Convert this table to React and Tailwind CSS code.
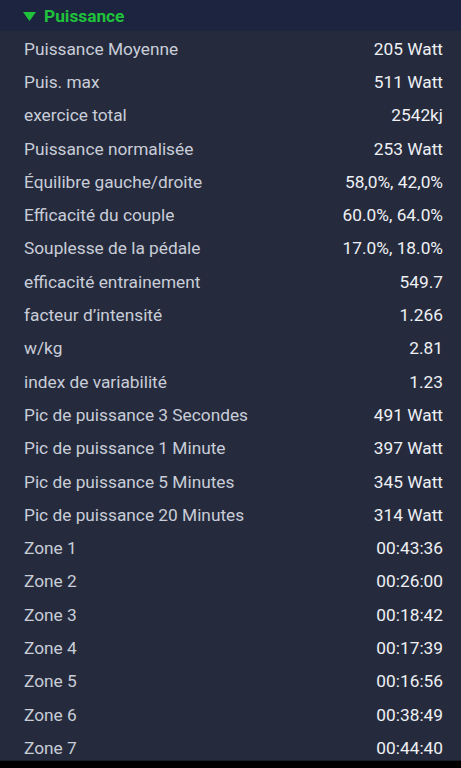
import React from "react";

const ROWS = [
  ["Puissance Moyenne", "205 Watt"],
  ["Puis. max", "511 Watt"],
  ["exercice total", "2542kj"],
  ["Puissance normalisée", "253 Watt"],
  ["Équilibre gauche/droite", "58,0%, 42,0%"],
  ["Efficacité du couple", "60.0%, 64.0%"],
  ["Souplesse de la pédale", "17.0%, 18.0%"],
  ["efficacité entrainement", "549.7"],
  ["facteur d’intensité", "1.266"],
  ["w/kg", "2.81"],
  ["index de variabilité", "1.23"],
  ["Pic de puissance 3 Secondes", "491 Watt"],
  ["Pic de puissance 1 Minute", "397 Watt"],
  ["Pic de puissance 5 Minutes", "345 Watt"],
  ["Pic de puissance 20 Minutes", "314 Watt"],
  ["Zone 1", "00:43:36"],
  ["Zone 2", "00:26:00"],
  ["Zone 3", "00:18:42"],
  ["Zone 4", "00:17:39"],
  ["Zone 5", "00:16:56"],
  ["Zone 6", "00:38:49"],
  ["Zone 7", "00:44:40"],
];

export default function App() {
  return (
    <div className="h-[768px] bg-black overflow-hidden font-['Roboto',sans-serif]">
      <div className="h-[761px] bg-[#252b3d] overflow-hidden border-b border-[#1a1f2c]">
        {/* Section header */}
        <div className="h-[31px] bg-[#1c2440] flex items-center pl-[23px] gap-[8px] pt-[3px]">
          <svg width="13" height="10" viewBox="0 0 13 10">
            <polygon points="0,0 13,0 6.5,9" fill="#1fc23a" />
          </svg>
          <span className="text-[17.3px] font-bold text-[#1fc23a]">Puissance</span>
        </div>
        {/* Stat rows */}
        <div className="pt-[2px]">
          {ROWS.map(([label, value]) => (
            <div
              key={label}
              className="h-[33.3px] flex items-center justify-between pl-[24px] pr-[18px] text-[17.3px]"
            >
              <span className="text-[#c9cdd8]">{label}</span>
              <span className="text-[#eef0f4]">{value}</span>
            </div>
          ))}
        </div>
      </div>
    </div>
  );
}
